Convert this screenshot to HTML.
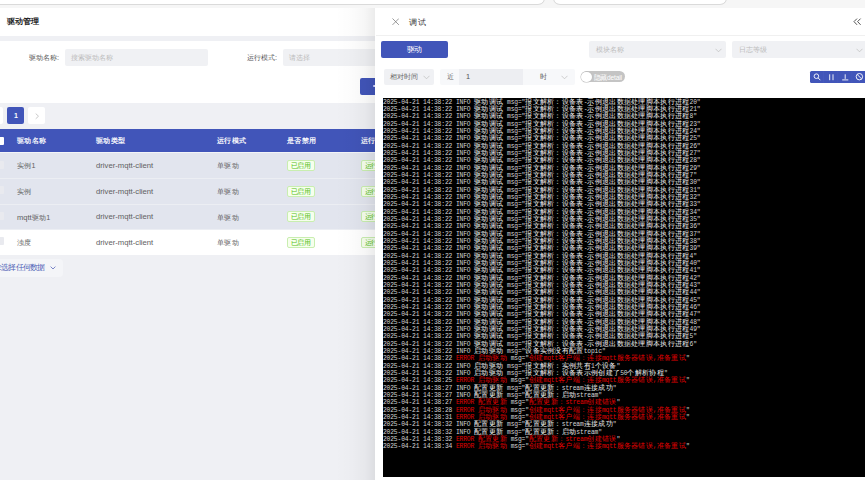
<!DOCTYPE html>
<html><head><meta charset="utf-8">
<style>
*{margin:0;padding:0;box-sizing:border-box}
html,body{width:865px;height:480px;overflow:hidden}
body{position:relative;background:#eff0f4;font-family:"Liberation Sans",sans-serif;color:#333}
.a{position:absolute}
.topstrip{left:0;top:0;width:865px;height:7.5px;background:#f6f6f6}
.tab{top:-6px;height:10.5px;background:#fff;border:1px solid #dadada;border-top:none;border-radius:0 0 7px 7px}
.titlebar{left:0;top:7.5px;width:865px;height:28.5px;background:#fff}
.title{left:7px;top:15.5px;font-size:8px;font-weight:bold;color:#222;line-height:12px}
.form{left:0;top:41px;width:865px;height:62px;background:#fff}
.lbl{font-size:7.35px;color:#555;line-height:10px}
.inp{background:#f0f1f4;border-radius:2px}
.ph{font-size:7.2px;color:#bbb;line-height:10px}
.btnblue{background:#4155b9;border-radius:2px}
.pg{width:17px;height:17px;border-radius:2px;background:#fff;font-size:7px;line-height:17px;text-align:center;color:#aaa}
.thead{left:0;top:128.8px;width:865px;height:23.5px;background:#4155b9}
.th{font-size:7.2px;letter-spacing:0.3px;color:#fff;-webkit-text-stroke:0.2px #fff;line-height:10px;top:136px}
.row{left:0;width:865px;height:25.5px;background:#e2e5ee;border-top:1px solid #eceef3}
.td{font-size:7.2px;letter-spacing:0.3px;color:#606060;line-height:10px}
.tag{width:27.5px;height:11px;border:0.8px solid #c9eeb0;background:#f6ffed;color:#55c020;font-size:6.6px;letter-spacing:-0.3px;line-height:9.6px;text-align:center;border-radius:2px}
.drawer{left:375.3px;top:7.5px;width:490px;height:473px;background:#fff}
.shadow{left:335px;top:7.5px;width:40.3px;height:473px;background:linear-gradient(to right,rgba(0,0,0,0),rgba(0,0,0,.012) 40%,rgba(0,0,0,.035) 75%,rgba(0,0,0,.08))}
.log{left:382.9px;top:97.6px;width:483px;height:379.2px;background:#000;overflow:hidden;font-family:"Liberation Mono",monospace;font-size:6.3px;line-height:7.33px;letter-spacing:-0.13px;padding-top:1.2px;color:#d4d4d4;}
.log div{white-space:pre}
.log div{height:7.33px}
.log i{font-style:normal;font-size:6.6px;letter-spacing:0.3px;color:#f4f4f4}
.log .e i{color:#e00000}
.log b{font-weight:normal}
.log .e{color:#e00000}
svg{display:block}
</style></head><body>
<div class="a topstrip"></div>
<div class="a tab" style="left:-10px;width:554.5px"></div>
<div class="a tab" style="left:552.5px;width:174.5px"></div>
<div class="a titlebar"></div>
<div class="a title">驱动管理</div>
<div class="a form"></div>
<div class="a lbl" style="left:29px;top:52.5px">驱动名称:</div>
<div class="a inp" style="left:65px;top:49px;width:143px;height:17px"></div>
<div class="a ph" style="left:71px;top:52.5px">搜索驱动名称</div>
<div class="a lbl" style="left:247px;top:52.5px">运行模式:</div>
<div class="a inp" style="left:283px;top:49px;width:100px;height:17px"></div>
<div class="a ph" style="left:289px;top:52.5px">请选择</div>
<div class="a btnblue" style="left:360.4px;top:78.3px;width:40px;height:16.5px"></div>
<div class="a pg" style="left:-14px;top:107px"></div>
<div class="a pg" style="left:7.4px;top:107px;background:#4155b9;color:#fff;font-weight:bold">1</div>
<div class="a pg" style="left:28px;top:107px"></div><svg class="a" style="left:34.5px;top:113px" width="4.5" height="6.5" viewBox="0 0 4.5 6.5"><path d="M0.7 0.6L3.5 3.2L0.7 5.8" fill="none" stroke="#bcbcbc" stroke-width="0.8"/></svg>
<div class="a thead"></div>
<div class="a" style="left:-4px;top:137px;width:8px;height:8px;background:#fff;border-radius:1px"></div>
<div class="a th" style="left:17px">驱动名称</div>
<div class="a th" style="left:96px">驱动类型</div>
<div class="a th" style="left:217px">运行模式</div>
<div class="a th" style="left:287px">是否禁用</div>
<div class="a th" style="left:361px">运行状态</div>
<div class="a row" style="top:152.3px;border-top-color:#f3f4f7;"></div>
<div class="a" style="left:-4px;top:160.5px;width:8px;height:8px;background:#e9eaef;border-radius:1px"></div>
<div class="a td" style="left:17px;top:161.20000000000002px">实例<span style=letter-spacing:0>1</span></div>
<div class="a td" style="left:96px;top:161.0px;font-size:7.7px;letter-spacing:0">driver-mqtt-client</div>
<div class="a td" style="left:217px;top:161.20000000000002px">单驱动</div>
<div class="a tag" style="left:287px;top:160.10000000000002px">已启用</div>
<div class="a tag" style="left:361px;top:160.10000000000002px">运行中</div>
<div class="a row" style="top:178px;"></div>
<div class="a" style="left:-4px;top:186.2px;width:8px;height:8px;background:#e9eaef;border-radius:1px"></div>
<div class="a td" style="left:17px;top:186.9px">实例</div>
<div class="a td" style="left:96px;top:186.7px;font-size:7.7px;letter-spacing:0">driver-mqtt-client</div>
<div class="a td" style="left:217px;top:186.9px">单驱动</div>
<div class="a tag" style="left:287px;top:185.8px">已启用</div>
<div class="a tag" style="left:361px;top:185.8px">运行中</div>
<div class="a row" style="top:203.6px;"></div>
<div class="a" style="left:-4px;top:211.79999999999998px;width:8px;height:8px;background:#e9eaef;border-radius:1px"></div>
<div class="a td" style="left:17px;top:212.5px"><span style=letter-spacing:0;font-size:7.5px>mqtt</span>驱动<span style=letter-spacing:0>1</span></div>
<div class="a td" style="left:96px;top:212.29999999999998px;font-size:7.7px;letter-spacing:0">driver-mqtt-client</div>
<div class="a td" style="left:217px;top:212.5px">单驱动</div>
<div class="a tag" style="left:287px;top:211.4px">已启用</div>
<div class="a tag" style="left:361px;top:211.4px">运行中</div>
<div class="a row" style="top:229.1px;background:#fff;"></div>
<div class="a" style="left:-4px;top:237.29999999999998px;width:8px;height:8px;background:#e9eaef;border-radius:1px"></div>
<div class="a td" style="left:17px;top:238.0px">浊度</div>
<div class="a td" style="left:96px;top:237.79999999999998px;font-size:7.7px;letter-spacing:0">driver-mqtt-client</div>
<div class="a td" style="left:217px;top:238.0px">单驱动</div>
<div class="a tag" style="left:287px;top:236.9px">已启用</div>
<div class="a tag" style="left:361px;top:236.9px">运行中</div>

<div class="a" style="left:-10px;top:259px;width:73px;height:18px;background:#f4f5f8;border-radius:4px"></div>
<div class="a" style="left:-6.4px;top:263px;font-size:7.6px;letter-spacing:-0.7px;line-height:10px;color:#4d5db5">未选择任何数据</div><svg class="a" style="left:50px;top:266px" width="6" height="4" viewBox="0 0 6 4"><path d="M0.6 0.6L3 3L5.4 0.6" fill="none" stroke="#5a69bb" stroke-width="0.8"/></svg>
<div class="a shadow"></div>
<div class="a" style="left:373.4px;top:84.6px;width:2.6px;height:2.6px;border-radius:50%;background:#c9cdf0"></div>
<div class="a drawer"></div>

<svg class="a" style="left:391.8px;top:17.8px" width="7.4" height="7.4" viewBox="0 0 7.4 7.4"><path d="M0.5 0.5L6.9 6.9M6.9 0.5L0.5 6.9" stroke="#777" stroke-width="0.75"/></svg>
<div class="a" style="left:409.2px;top:16.5px;font-size:8.2px;letter-spacing:0.4px;line-height:11px;color:#333">调试</div>
<svg class="a" style="left:853.2px;top:17.6px" width="9" height="8" viewBox="0 0 9 8"><path d="M4 0.6L1 3.6L4 6.8M7.6 0.6L4.6 3.6L7.6 6.8" fill="none" stroke="#555" stroke-width="1"/></svg>
<div class="a" style="left:375.5px;top:35px;width:490px;height:1px;background:#f0f0f0"></div>
<div class="a btnblue" style="left:381px;top:41.3px;width:67px;height:16.4px;color:#fff;font-size:7.8px;letter-spacing:-0.2px;line-height:17.2px;text-align:center">驱动</div>
<div class="a inp" style="left:589.2px;top:41.3px;width:137px;height:16.7px"></div>
<div class="a ph" style="left:596px;top:44.8px">模块名称</div>
<svg class="a" style="left:714.5px;top:48px" width="7" height="5" viewBox="0 0 7 5"><path d="M0.5 0.8L3.5 3.8L6.5 0.8" fill="none" stroke="#bbb" stroke-width="0.7"/></svg>
<div class="a inp" style="left:732.2px;top:41.3px;width:140px;height:16.7px"></div>
<div class="a ph" style="left:738.5px;top:44.8px">日志等级</div>
<svg class="a" style="left:856px;top:48px" width="7" height="5" viewBox="0 0 7 5"><path d="M0.5 0.8L3.5 3.8L6.5 0.8" fill="none" stroke="#bbb" stroke-width="0.7"/></svg>
<div class="a inp" style="left:383.8px;top:68.7px;width:50.3px;height:16.2px"></div>
<div class="a ph" style="left:389.7px;top:72.2px;color:#666">相对时间</div>
<svg class="a" style="left:422.5px;top:75px" width="7" height="5" viewBox="0 0 7 5"><path d="M0.5 0.8L3.5 3.8L6.5 0.8" fill="none" stroke="#bbb" stroke-width="0.7"/></svg>
<div class="a" style="left:440px;top:68.6px;width:135px;height:16.4px;background:#f7f8fa;border-radius:2px"></div>
<div class="a" style="left:459.2px;top:68.6px;width:63.5px;height:16.4px;background:#edeef2"></div>
<div class="a lbl" style="left:446.5px;top:71.8px;color:#666">近</div>
<div class="a lbl" style="left:466px;top:71.8px;color:#555">1</div>
<div class="a lbl" style="left:539.5px;top:71.8px;color:#555">时</div>
<svg class="a" style="left:560.5px;top:75px" width="7" height="5" viewBox="0 0 7 5"><path d="M0.5 0.8L3.5 3.8L6.5 0.8" fill="none" stroke="#bbb" stroke-width="0.7"/></svg>
<div class="a" style="left:580.9px;top:71.1px;width:44px;height:11.2px;background:#c4c4c4;border-radius:6px"></div>
<div class="a" style="left:581.2px;top:71.6px;width:10.4px;height:10.4px;background:#fff;border-radius:50%;box-shadow:0 0 0 0.5px #bbb"></div>
<div class="a" style="left:593.5px;top:73.9px;font-size:6.6px;letter-spacing:-0.2px;line-height:8px;color:#fff">隐藏detail</div>
<div class="a btnblue" style="left:809.7px;top:70.7px;width:60px;height:12.2px;border-radius:1.5px"></div>
<svg class="a" style="left:809.7px;top:70.7px" width="56" height="13" viewBox="809.7 70.7 56 13">
<g fill="none" stroke="#fff" stroke-width="0.9">
<circle cx="816.1" cy="75.9" r="2.3"/><path d="M817.8 77.6L820 79.9"/>
<path d="M829.4 74V79.9M832.7 74V79.9"/>
<path d="M844.9 74V78.6M841.9 79.6H848" />
<circle cx="859.1" cy="76.4" r="3.2"/><path d="M856.9 74.2L861.3 78.6"/>
</g>
<path d="M823.2 71V82.6M837.5 71V82.6M851.6 71V82.6" stroke="#4a5cc0" stroke-width="0.5"/>
</svg>

<div class="a log">
<div>2025-04-21 14:38:22 <span class="w">INFO</span> <span class="m"><i>驱动调试</i></span> msg=&quot;<i>报文解析：设备表</i>-<i>示例退出数据处理脚本执行进程</i>20&quot;</div>
<div>2025-04-21 14:38:22 <span class="w">INFO</span> <span class="m"><i>驱动调试</i></span> msg=&quot;<i>报文解析：设备表</i>-<i>示例退出数据处理脚本执行进程</i>21&quot;</div>
<div>2025-04-21 14:38:22 <span class="w">INFO</span> <span class="m"><i>驱动调试</i></span> msg=&quot;<i>报文解析：设备表</i>-<i>示例退出数据处理脚本执行进程</i>8&quot;</div>
<div>2025-04-21 14:38:22 <span class="w">INFO</span> <span class="m"><i>驱动调试</i></span> msg=&quot;<i>报文解析：设备表</i>-<i>示例退出数据处理脚本执行进程</i>23&quot;</div>
<div>2025-04-21 14:38:22 <span class="w">INFO</span> <span class="m"><i>驱动调试</i></span> msg=&quot;<i>报文解析：设备表</i>-<i>示例退出数据处理脚本执行进程</i>24&quot;</div>
<div>2025-04-21 14:38:22 <span class="w">INFO</span> <span class="m"><i>驱动调试</i></span> msg=&quot;<i>报文解析：设备表</i>-<i>示例退出数据处理脚本执行进程</i>25&quot;</div>
<div>2025-04-21 14:38:22 <span class="w">INFO</span> <span class="m"><i>驱动调试</i></span> msg=&quot;<i>报文解析：设备表</i>-<i>示例退出数据处理脚本执行进程</i>26&quot;</div>
<div>2025-04-21 14:38:22 <span class="w">INFO</span> <span class="m"><i>驱动调试</i></span> msg=&quot;<i>报文解析：设备表</i>-<i>示例退出数据处理脚本执行进程</i>27&quot;</div>
<div>2025-04-21 14:38:22 <span class="w">INFO</span> <span class="m"><i>驱动调试</i></span> msg=&quot;<i>报文解析：设备表</i>-<i>示例退出数据处理脚本执行进程</i>28&quot;</div>
<div>2025-04-21 14:38:22 <span class="w">INFO</span> <span class="m"><i>驱动调试</i></span> msg=&quot;<i>报文解析：设备表</i>-<i>示例退出数据处理脚本执行进程</i>29&quot;</div>
<div>2025-04-21 14:38:22 <span class="w">INFO</span> <span class="m"><i>驱动调试</i></span> msg=&quot;<i>报文解析：设备表</i>-<i>示例退出数据处理脚本执行进程</i>7&quot;</div>
<div>2025-04-21 14:38:22 <span class="w">INFO</span> <span class="m"><i>驱动调试</i></span> msg=&quot;<i>报文解析：设备表</i>-<i>示例退出数据处理脚本执行进程</i>30&quot;</div>
<div>2025-04-21 14:38:22 <span class="w">INFO</span> <span class="m"><i>驱动调试</i></span> msg=&quot;<i>报文解析：设备表</i>-<i>示例退出数据处理脚本执行进程</i>31&quot;</div>
<div>2025-04-21 14:38:22 <span class="w">INFO</span> <span class="m"><i>驱动调试</i></span> msg=&quot;<i>报文解析：设备表</i>-<i>示例退出数据处理脚本执行进程</i>32&quot;</div>
<div>2025-04-21 14:38:22 <span class="w">INFO</span> <span class="m"><i>驱动调试</i></span> msg=&quot;<i>报文解析：设备表</i>-<i>示例退出数据处理脚本执行进程</i>33&quot;</div>
<div>2025-04-21 14:38:22 <span class="w">INFO</span> <span class="m"><i>驱动调试</i></span> msg=&quot;<i>报文解析：设备表</i>-<i>示例退出数据处理脚本执行进程</i>34&quot;</div>
<div>2025-04-21 14:38:22 <span class="w">INFO</span> <span class="m"><i>驱动调试</i></span> msg=&quot;<i>报文解析：设备表</i>-<i>示例退出数据处理脚本执行进程</i>35&quot;</div>
<div>2025-04-21 14:38:22 <span class="w">INFO</span> <span class="m"><i>驱动调试</i></span> msg=&quot;<i>报文解析：设备表</i>-<i>示例退出数据处理脚本执行进程</i>36&quot;</div>
<div>2025-04-21 14:38:22 <span class="w">INFO</span> <span class="m"><i>驱动调试</i></span> msg=&quot;<i>报文解析：设备表</i>-<i>示例退出数据处理脚本执行进程</i>37&quot;</div>
<div>2025-04-21 14:38:22 <span class="w">INFO</span> <span class="m"><i>驱动调试</i></span> msg=&quot;<i>报文解析：设备表</i>-<i>示例退出数据处理脚本执行进程</i>38&quot;</div>
<div>2025-04-21 14:38:22 <span class="w">INFO</span> <span class="m"><i>驱动调试</i></span> msg=&quot;<i>报文解析：设备表</i>-<i>示例退出数据处理脚本执行进程</i>39&quot;</div>
<div>2025-04-21 14:38:22 <span class="w">INFO</span> <span class="m"><i>驱动调试</i></span> msg=&quot;<i>报文解析：设备表</i>-<i>示例退出数据处理脚本执行进程</i>4&quot;</div>
<div>2025-04-21 14:38:22 <span class="w">INFO</span> <span class="m"><i>驱动调试</i></span> msg=&quot;<i>报文解析：设备表</i>-<i>示例退出数据处理脚本执行进程</i>40&quot;</div>
<div>2025-04-21 14:38:22 <span class="w">INFO</span> <span class="m"><i>驱动调试</i></span> msg=&quot;<i>报文解析：设备表</i>-<i>示例退出数据处理脚本执行进程</i>41&quot;</div>
<div>2025-04-21 14:38:22 <span class="w">INFO</span> <span class="m"><i>驱动调试</i></span> msg=&quot;<i>报文解析：设备表</i>-<i>示例退出数据处理脚本执行进程</i>42&quot;</div>
<div>2025-04-21 14:38:22 <span class="w">INFO</span> <span class="m"><i>驱动调试</i></span> msg=&quot;<i>报文解析：设备表</i>-<i>示例退出数据处理脚本执行进程</i>43&quot;</div>
<div>2025-04-21 14:38:22 <span class="w">INFO</span> <span class="m"><i>驱动调试</i></span> msg=&quot;<i>报文解析：设备表</i>-<i>示例退出数据处理脚本执行进程</i>44&quot;</div>
<div>2025-04-21 14:38:22 <span class="w">INFO</span> <span class="m"><i>驱动调试</i></span> msg=&quot;<i>报文解析：设备表</i>-<i>示例退出数据处理脚本执行进程</i>45&quot;</div>
<div>2025-04-21 14:38:22 <span class="w">INFO</span> <span class="m"><i>驱动调试</i></span> msg=&quot;<i>报文解析：设备表</i>-<i>示例退出数据处理脚本执行进程</i>46&quot;</div>
<div>2025-04-21 14:38:22 <span class="w">INFO</span> <span class="m"><i>驱动调试</i></span> msg=&quot;<i>报文解析：设备表</i>-<i>示例退出数据处理脚本执行进程</i>47&quot;</div>
<div>2025-04-21 14:38:22 <span class="w">INFO</span> <span class="m"><i>驱动调试</i></span> msg=&quot;<i>报文解析：设备表</i>-<i>示例退出数据处理脚本执行进程</i>48&quot;</div>
<div>2025-04-21 14:38:22 <span class="w">INFO</span> <span class="m"><i>驱动调试</i></span> msg=&quot;<i>报文解析：设备表</i>-<i>示例退出数据处理脚本执行进程</i>49&quot;</div>
<div>2025-04-21 14:38:22 <span class="w">INFO</span> <span class="m"><i>驱动调试</i></span> msg=&quot;<i>报文解析：设备表</i>-<i>示例退出数据处理脚本执行进程</i>5&quot;</div>
<div>2025-04-21 14:38:22 <span class="w">INFO</span> <span class="m"><i>驱动调试</i></span> msg=&quot;<i>报文解析：设备表</i>-<i>示例退出数据处理脚本执行进程</i>6&quot;</div>
<div>2025-04-21 14:38:22 <span class="w">INFO</span> <span class="m"><i>启动驱动</i></span> msg=&quot;<i>设备实例没有配置</i>topic&quot;</div>
<div>2025-04-21 14:38:22 <b class="e">ERROR <i>启动驱动</i></b> msg=&quot;<b class="e"><i>创建</i>mqtt<i>客户端：连接</i>mqtt<i>服务器错误</i>,<i>准备重试</i></b>&quot;</div>
<div>2025-04-21 14:38:22 <span class="w">INFO</span> <span class="m"><i>启动驱动</i></span> msg=&quot;<i>报文解析：实例共有</i>1<i>个设备</i>&quot;</div>
<div>2025-04-21 14:38:22 <span class="w">INFO</span> <span class="m"><i>启动驱动</i></span> msg=&quot;<i>报文解析：设备表示例创建了</i>50<i>个解析协程</i>&quot;</div>
<div>2025-04-21 14:38:25 <b class="e">ERROR <i>启动驱动</i></b> msg=&quot;<b class="e"><i>创建</i>mqtt<i>客户端：连接</i>mqtt<i>服务器错误</i>,<i>准备重试</i></b>&quot;</div>
<div>2025-04-21 14:38:27 <span class="w">INFO</span> <span class="m"><i>配置更新</i></span> msg=&quot;<i>配置更新：</i>stream<i>连接成功</i>&quot;</div>
<div>2025-04-21 14:38:27 <span class="w">INFO</span> <span class="m"><i>配置更新</i></span> msg=&quot;<i>配置更新：启动</i>stream&quot;</div>
<div>2025-04-21 14:38:27 <b class="e">ERROR <i>配置更新</i></b> msg=&quot;<b class="e"><i>配置更新：</i>stream<i>创建错误</i></b>&quot;</div>
<div>2025-04-21 14:38:28 <b class="e">ERROR <i>启动驱动</i></b> msg=&quot;<b class="e"><i>创建</i>mqtt<i>客户端：连接</i>mqtt<i>服务器错误</i>,<i>准备重试</i></b>&quot;</div>
<div>2025-04-21 14:38:31 <b class="e">ERROR <i>启动驱动</i></b> msg=&quot;<b class="e"><i>创建</i>mqtt<i>客户端：连接</i>mqtt<i>服务器错误</i>,<i>准备重试</i></b>&quot;</div>
<div>2025-04-21 14:38:32 <span class="w">INFO</span> <span class="m"><i>配置更新</i></span> msg=&quot;<i>配置更新：</i>stream<i>连接成功</i>&quot;</div>
<div>2025-04-21 14:38:32 <span class="w">INFO</span> <span class="m"><i>配置更新</i></span> msg=&quot;<i>配置更新：启动</i>stream&quot;</div>
<div>2025-04-21 14:38:32 <b class="e">ERROR <i>配置更新</i></b> msg=&quot;<b class="e"><i>配置更新：</i>stream<i>创建错误</i></b>&quot;</div>
<div>2025-04-21 14:38:34 <b class="e">ERROR <i>启动驱动</i></b> msg=&quot;<b class="e"><i>创建</i>mqtt<i>客户端：连接</i>mqtt<i>服务器错误</i>,<i>准备重试</i></b>&quot;</div>
</div>
</body></html>
